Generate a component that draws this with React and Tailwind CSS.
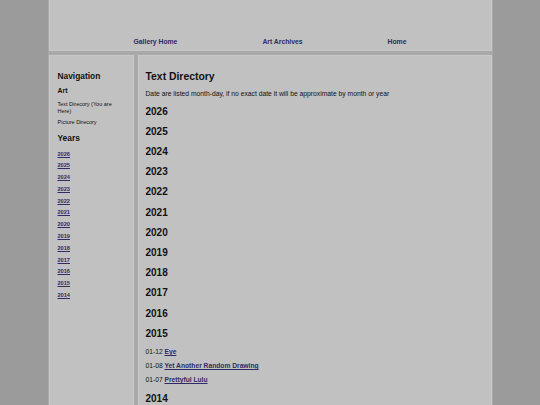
import React from 'react';

const years = ['2026', '2025', '2024', '2023', '2022', '2021', '2020', '2019', '2018', '2017', '2016', '2015', '2014'];

const entries2015 = [
  { date: '01-12', title: 'Eye' },
  { date: '01-08', title: 'Yet Another Random Drawing' },
  { date: '01-07', title: 'Prettyful Lulu' },
];

const linkCls = 'font-bold text-[#2f2b66] underline';

const App = () => {
  return (
    <div className="min-h-screen bg-[#9b9b9b] font-['Liberation_Sans',Arial,sans-serif] text-[#111]">
      <div className="w-[445px] mx-auto bg-[#a9a9a9] px-[1px] h-[405px] overflow-hidden flex flex-col">
        {/* header */}
        <div className="h-[50.5px] shrink-0 bg-[#c1c1c1] border-x border-b border-[#c8c8c8] flex items-end justify-center gap-[85px] pb-[3.5px]">
          <a className="font-bold text-[6.8px] leading-[8px] text-[#2f2b66]">Gallery Home</a>
          <a className="font-bold text-[6.8px] leading-[8px] text-[#2f2b66]">Art Archives</a>
          <a className="font-bold text-[6.8px] leading-[8px] text-[#2f2b66]">Home</a>
        </div>

        <div className="flex gap-[4px] mt-[4px] flex-1">
          {/* sidebar */}
          <div className="w-[85px] shrink-0 bg-[#c1c1c1] border border-[#c8c8c8] pl-[8px] pr-[9px] pt-[15px]">
            <h3 className="font-bold text-[8.4px] leading-[10px]">Navigation</h3>
            <div className="font-bold text-[6.9px] leading-[8px] mt-[6px]">Art</div>
            <div className="text-[5.5px] leading-[7px] mt-[6.5px]">Text Direcory (You are Here)</div>
            <div className="text-[5.5px] leading-[7px] mt-[4px]">Picture Direcory</div>
            <h3 className="font-bold text-[8.4px] leading-[10px] mt-[6.5px]">Years</h3>
            <ul className="mt-[6px]">
              {years.map((y) => (
                <li key={y} className="text-[5.6px] leading-[11.8px]">
                  <a className={linkCls}>{y}</a>
                </li>
              ))}
            </ul>
          </div>

          {/* main */}
          <div className="flex-1 bg-[#c1c1c1] border border-[#c8c8c8] pl-[7px] pt-[15px]">
            <h2 className="font-bold text-[10.4px] leading-[12px]">Text Directory</h2>
            <p className="text-[6.75px] leading-[8px] mt-[7px]">
              Date are listed month-day, if no exact date it will be approximate by month or year
            </p>
            <div className="mt-[4px]">
              {years.map((y) => (
                <div key={y}>
                  <h2 className={`font-bold text-[10px] leading-[20.2px] ${y === '2014' ? 'mt-[2px]' : ''}`}>{y}</h2>
                  {y === '2015' && (
                    <div className="pt-[1px]">
                      {entries2015.map((e) => (
                        <div key={e.date} className="text-[6.7px] leading-[14px]">
                          {e.date} <a className={linkCls}>{e.title}</a>
                        </div>
                      ))}
                    </div>
                  )}
                </div>
              ))}
            </div>
          </div>
        </div>
      </div>
    </div>
  );
};

export default App;
